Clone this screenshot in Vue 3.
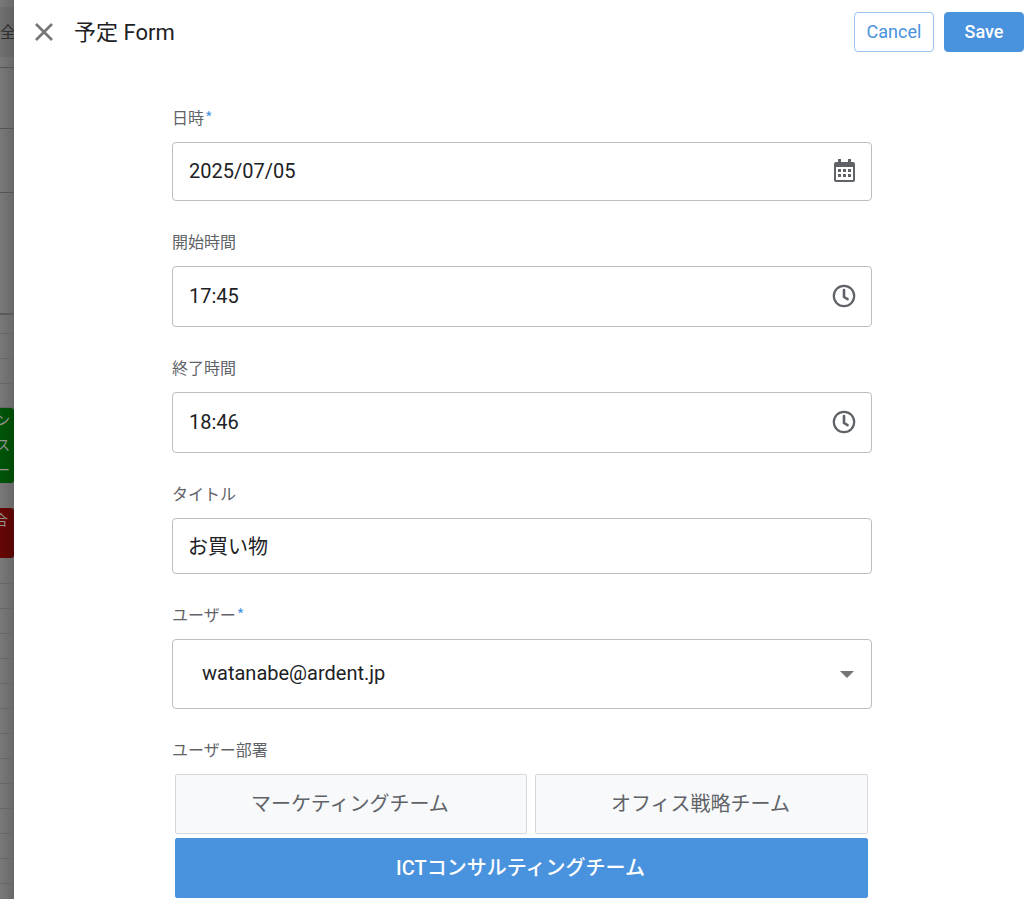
<script setup>
import { ref } from 'vue'

const date = ref('2025/07/05')
const start = ref('17:45')
const end = ref('18:46')
const title = ref('お買い物')
const user = ref('watanabe@ardent.jp')
const teams = ['マーケティングチーム', 'オフィス戦略チーム', 'ICTコンサルティングチーム']
const team = ref(teams[2])
const slots = Array.from({ length: 14 }, (_, i) => i)
</script>

<template>
  <div class="screen">
    <div class="calendar" aria-hidden="true">
      <div class="tab-bar">全</div>
      <div class="row gap"></div>
      <div class="row head"></div>
      <div class="row head tall"></div>
      <div class="row all-day"></div>
      <div class="row first"></div>
      <div class="row"></div>
      <div class="row"></div>
      <div class="row last"></div>
      <div class="event green"><span>ン</span><span>ス</span><span>ー</span></div>
      <div class="spacer"></div>
      <div class="event red"><span>合</span></div>
      <div v-for="s in slots" :key="s" class="row"></div>
    </div>

    <main class="panel">
      <header class="top">
        <button class="close" type="button" aria-label="Close">
          <svg viewBox="0 0 20 20" width="20" height="20"><path d="M2 2 18 18M18 2 2 18" fill="none" stroke="#757575" stroke-width="2.6" /></svg>
        </button>
        <h1>予定 Form</h1>
        <button class="btn outline" type="button">Cancel</button>
        <button class="btn solid" type="submit" form="event-form">Save</button>
      </header>

      <form id="event-form" class="form" @submit.prevent>
        <div class="field">
          <label for="date">日時<span class="req">*</span></label>
          <div class="box date">
            <input id="date" v-model="date" type="text" required />
            <svg class="icon" viewBox="0 0 24 24" width="24" height="24">
              <path fill="#5f6368" fill-rule="evenodd" d="M6 0h3v3h7V0h3v3h2q2 0 2 2v16q0 2-2 2H4q-2 0-2-2V5q0-2 2-2h2zM4 7v14h17V7z" />
              <path fill="#5f6368" d="M4 6h17v2H4zM6 10h3v3H6zm5 0h3v3h-3zm5 0h3v3h-3zM6 15h3v3H6zm5 0h3v3h-3zm5 0h3v3h-3z" />
            </svg>
          </div>
        </div>
        <div class="field">
          <label for="start">開始時間</label>
          <div class="box time">
            <input id="start" v-model="start" type="text" />
            <svg class="icon" viewBox="0 0 24 24" width="24" height="24"><circle cx="12" cy="12" r="10.200" fill="none" stroke="#5f6368" stroke-width="2.200" /><path d="M12 6v7l3.500 2.200" fill="none" stroke="#5f6368" stroke-width="2.600" stroke-linecap="round" stroke-linejoin="round" /></svg>
          </div>
        </div>
        <div class="field">
          <label for="end">終了時間</label>
          <div class="box time">
            <input id="end" v-model="end" type="text" />
            <svg class="icon" viewBox="0 0 24 24" width="24" height="24"><circle cx="12" cy="12" r="10.200" fill="none" stroke="#5f6368" stroke-width="2.200" /><path d="M12 6v7l3.500 2.200" fill="none" stroke="#5f6368" stroke-width="2.600" stroke-linecap="round" stroke-linejoin="round" /></svg>
          </div>
        </div>
        <div class="field">
          <label for="title">タイトル</label>
          <div class="box title">
            <input id="title" v-model="title" type="text" />
          </div>
        </div>
        <div class="field">
          <label for="user">ユーザー<span class="req">*</span></label>
          <div class="box user">
            <select id="user" v-model="user"><option>watanabe@ardent.jp</option></select>
            <svg class="caret" viewBox="0 0 14 7" width="14" height="7"><path d="M0 0h14L7 7z" fill="#757575" /></svg>
          </div>
        </div>
        <div class="field">
          <span id="team-label" class="label">ユーザー部署</span>
          <div class="teams" role="group" aria-labelledby="team-label">
            <button
              v-for="t in teams"
              :key="t"
              type="button"
              class="team"
              :class="{ active: t === team }"
              :aria-pressed="t === team"
              @click="team = t"
            >{{ t }}</button>
          </div>
        </div>
      </form>
    </main>
  </div>
</template>

<style>
body {
  margin: 0;
  background: #fff;
}
</style>

<style scoped>
.screen,
.screen button,
.screen input,
.screen select {
  font-family: Roboto, "Noto Sans CJK JP", sans-serif;
}
.screen {
  display: flex;
  height: 100vh;
  overflow: hidden;
}
.screen * {
  box-sizing: border-box;
}
.calendar {
  flex: 0 0 14px;
  overflow: hidden;
  background: linear-gradient(90deg, #797979, #686868);
}
.tab-bar {
  height: 50px;
  margin-top: 7px;
  line-height: 52px;
  font-size: 16px;
  color: #2d2e30;
  background: linear-gradient(90deg, #717171, #616161);
}
.row {
  height: 25px;
  border-bottom: 1px solid #666;
}
.row.gap {
  height: 11px;
  border-color: #555;
}
.row.head {
  height: 61px;
  border-color: #555;
}
.row.tall {
  height: 64px;
}
.row.all-day {
  height: 122px;
  border-bottom: 2px solid #5a5a5a;
}
.row.first {
  height: 19px;
}
.row.last {
  height: 24px;
}
.event {
  display: flex;
  flex-direction: column;
  align-items: flex-end;
  padding-right: 4px;
  border-radius: 0 3px 3px 0;
  font-size: 14px;
  line-height: 25px;
  color: #929292;
}
.event.green {
  height: 75px;
  background: linear-gradient(90deg, #005508, #004906);
}
.event.red {
  height: 50px;
  margin-bottom: 1px;
  padding-right: 6px;
  background: linear-gradient(90deg, #670606, #560505);
}
.spacer {
  height: 25px;
}
.panel {
  flex: 1;
  min-width: 0;
  overflow: hidden;
  background: #fff;
}
.top {
  display: flex;
  align-items: center;
  gap: 10px;
  height: 64px;
  padding: 0 3px 0 20px;
}
.close {
  display: flex;
  padding: 0;
  border: 0;
  background: none;
}
h1 {
  flex: 1;
  margin: 0 0 0 10px;
  padding-top: 2px;
  font-size: 22px;
  line-height: 32px;
  font-weight: 400;
  color: #202124;
}
.btn {
  width: 80px;
  height: 40px;
  padding: 0 0 2px;
  border: 1px solid #4992dd;
  border-radius: 4px;
  font-size: 18px;
}
.btn.outline {
  border-color: #9bc3ee;
  background: #fff;
  color: #4992dd;
}
.btn.solid {
  background: #4992dd;
  color: #fff;
  font-weight: 500;
}
.form {
  display: flex;
  flex-direction: column;
  gap: 29px;
  padding: 42px 16px 0 19px;
}
.field {
  display: flex;
  flex-direction: column;
  gap: 12px;
  width: 100%;
  max-width: 700px;
  margin: 0 auto;
}
label,
.label {
  height: 24px;
  font-size: 16px;
  line-height: 26px;
  color: #5f6368;
}
.req {
  margin-left: 1px;
  font-family: "Noto Sans CJK JP", sans-serif;
  line-height: 1;
  color: #4992dd;
}
.box {
  display: flex;
  align-items: center;
  height: 61px;
  padding: 0 15px 2px 16px;
  border: 1px solid #bdbdc2;
  border-radius: 4px;
}
.box.date {
  height: 59px;
}
.box.title {
  height: 56px;
  padding-left: 15px;
}
.box.user {
  height: 70px;
  padding: 0 17px 0 25px;
}
.box input,
.box select {
  flex: 1;
  min-width: 0;
  height: 100%;
  padding: 0;
  border: 0;
  outline: 0;
  appearance: none;
  background: none;
  font-size: 20px;
  color: #202124;
}
.box select {
  padding: 0 0 2px 4px;
}
.icon,
.caret {
  flex: none;
}
.teams {
  display: flex;
  flex-wrap: wrap;
  gap: 4px 8px;
  padding: 0 4px 0 3px;
}
.team {
  flex: 1 1 auto;
  height: 60px;
  padding: 0 61px 4px 59px;
  border: 1px solid #d5d8dd;
  border-radius: 2px;
  background: #f8f9fb;
  font-size: 20px;
  color: #5f6368;
}
.team.active {
  border-color: #4992dd;
  background: #4992dd;
  color: #fff;
  font-weight: 500;
}
</style>
